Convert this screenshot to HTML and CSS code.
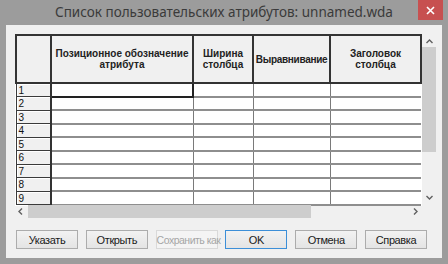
FILE: index.html
```html
<!DOCTYPE html>
<html lang="ru">
<head>
  <meta charset="UTF-8">
  <title>Список пользовательских атрибутов</title>
  <link rel="stylesheet" href="styles.css">
</head>
<body>
  <div class="window">
    <div class="titlebar">
      <span></span>
      <span class="title">Список пользовательских атрибутов: unnamed.wda</span>
      <span class="close">
        <svg width="9" height="9" viewBox="0 0 9 9"><path d="M1 1L8 8M8 1L1 8" stroke="#fff" stroke-width="1.6"/></svg>
      </span>
    </div>

    <div class="client">
      <!-- таблица атрибутов -->
      <div class="grid-box">
        <div class="grid-main">
          <table class="grid">
            <colgroup>
              <col class="c-num"><col class="c-pos"><col class="c-width"><col class="c-align"><col class="c-head">
            </colgroup>
            <thead>
              <tr>
                <th class="corner"></th>
                <th>Позиционное обозначение<br>атрибута</th>
                <th>Ширина<br>столбца</th>
                <th class="tight">Выравнивание</th>
                <th>Заголовок<br>столбца</th>
              </tr>
            </thead>
            <tbody>
              <tr><td class="num">1</td><td class="active"></td><td></td><td></td><td></td></tr>
              <tr><td class="num">2</td><td></td><td></td><td></td><td></td></tr>
              <tr><td class="num">3</td><td></td><td></td><td></td><td></td></tr>
              <tr><td class="num">4</td><td></td><td></td><td></td><td></td></tr>
              <tr><td class="num">5</td><td></td><td></td><td></td><td></td></tr>
              <tr><td class="num">6</td><td></td><td></td><td></td><td></td></tr>
              <tr><td class="num">7</td><td></td><td></td><td></td><td></td></tr>
              <tr><td class="num">8</td><td></td><td></td><td></td><td></td></tr>
              <tr><td class="num">9</td><td></td><td></td><td></td><td></td></tr>
            </tbody>
          </table>
          <div class="vscroll">
            <svg class="arrow" width="7" height="5" viewBox="0 0 7 5"><path d="M0.5 4L3.5 1L6.5 4" fill="none" stroke="#606060" stroke-width="1.4"/></svg>
            <div class="vthumb"></div>
            <div class="spacer"></div>
            <svg class="arrow" width="7" height="5" viewBox="0 0 7 5"><path d="M0.5 1L3.5 4L6.5 1" fill="none" stroke="#606060" stroke-width="1.4"/></svg>
          </div>
        </div>
        <div class="hscroll">
          <svg class="arrow" width="5" height="7" viewBox="0 0 5 7"><path d="M4 0.5L1 3.5L4 6.5" fill="none" stroke="#606060" stroke-width="1.4"/></svg>
          <div class="hthumb"></div>
          <div class="spacer"></div>
          <svg class="arrow" width="5" height="7" viewBox="0 0 5 7"><path d="M1 0.5L4 3.5L1 6.5" fill="none" stroke="#606060" stroke-width="1.4"/></svg>
        </div>
      </div>

      <div class="buttons">
        <button>Указать</button>
        <button>Открыть</button>
        <button disabled>Сохранить как</button>
        <button class="default">OK</button>
        <button>Отмена</button>
        <button>Справка</button>
      </div>
    </div>
  </div>
</body>
</html>
```

FILE: styles.css
```css
:root {
  --frame: #9c9c9c;
  --face: #f0f0f0;
  --dark: #333333;
  --line: #8e8e8e;
  --thumb: #cdcdcd;
}
* { box-sizing: border-box; margin: 0; padding: 0; }
body {
  width: 448px;
  height: 264px;
  background-color: var(--frame);
  font-family: 'Liberation Sans', Arial, sans-serif;
  overflow: hidden;
}
.window {
  display: flex;
  flex-direction: column;
  height: 264px;
}
.titlebar {
  display: grid;
  grid-template-columns: 1fr auto 1fr;
  height: 25px;
}
.title {
  font-family: 'Noto Sans', sans-serif;
  font-size: 13.5px;
  color: #3a3a3a;
  line-height: 24px;
  white-space: nowrap;
}
.close {
  justify-self: end;
  width: 25px;
  height: 20px;
  margin-right: 5px;
  background-color: #c75050;
  display: flex;
  align-items: center;
  justify-content: center;
}
.client {
  flex: 1;
  margin: 0 6px 6px;
  background-color: var(--face);
  padding: 9px 7px 0 9px;
}
.grid-box {
  width: 420px;
  height: 183px;
  display: flex;
  flex-direction: column;
}
.grid-main {
  display: flex;
  height: 170px;
}
.grid {
  width: 406px;
  table-layout: fixed;
  border-collapse: collapse;
  background-color: #fff;
  font-size: 10px;
  color: #111;
}
.c-num { width: 35px; }
.c-pos { width: 142px; }
.c-width { width: 60px; }
.c-align { width: 77px; }
.c-head { width: 91px; }
th {
  height: 48px;
  background-color: var(--face);
  border: 2px solid var(--dark);
  font-weight: bold;
  font-size: 10px;
  line-height: 11px;
  color: #222;
  padding: 0;
  white-space: nowrap;
}
th.tight { letter-spacing: -0.3px; }
td {
  height: 13.5px;
  border-left: 1px solid #7a7a7a;
  border-bottom: 2px solid var(--line);
  padding: 0;
}
td.num {
  background-color: var(--face);
  border: 1px solid #3a3a3a;
  border-right: 2px solid var(--dark);
  box-shadow: inset 1px 1px #fff;
  padding: 1px 0 0 2px;
  line-height: 11px;
}
td.active {
  border: 2px solid #222;
}
.vscroll {
  width: 14px;
  display: flex;
  flex-direction: column;
  align-items: center;
  background-color: var(--face);
}
.vscroll .arrow { margin: 5px 0 3px; }
.vscroll .arrow:last-child { margin: 3px 0 4px; }
.vthumb {
  width: 14px;
  height: 105px;
  background-color: var(--thumb);
}
.spacer { flex: 1; }
.hscroll {
  height: 13px;
  margin-top: 1px;
  display: flex;
  align-items: center;
  padding-right: 14px;
}
.hscroll .arrow { margin: 0 5px 0 3px; }
.hscroll .arrow:last-child { margin: 0 3px 0 0; }
.hthumb {
  width: 283px;
  height: 13px;
  background-color: var(--thumb);
}
.buttons {
  display: flex;
  justify-content: space-between;
  margin-top: 13px;
  width: 411px;
  margin-left: 1px;
}
button {
  width: 62px;
  height: 19px;
  font-family: 'Liberation Sans', Arial, sans-serif;
  font-size: 11px;
  letter-spacing: -0.4px;
  white-space: nowrap;
  overflow: visible;
  color: #1a1a1a;
  background: linear-gradient(#f2f2f2, #e4e4e4);
  border: 1px solid #acacac;
  padding: 0;
}
button:disabled {
  color: #a6a6a6;
  background: #f4f4f4;
  border-color: #d9d9d9;
  font-size: 10.5px;
  letter-spacing: -0.5px;
}
button.default {
  border-color: #3c8fd8;
}
```
